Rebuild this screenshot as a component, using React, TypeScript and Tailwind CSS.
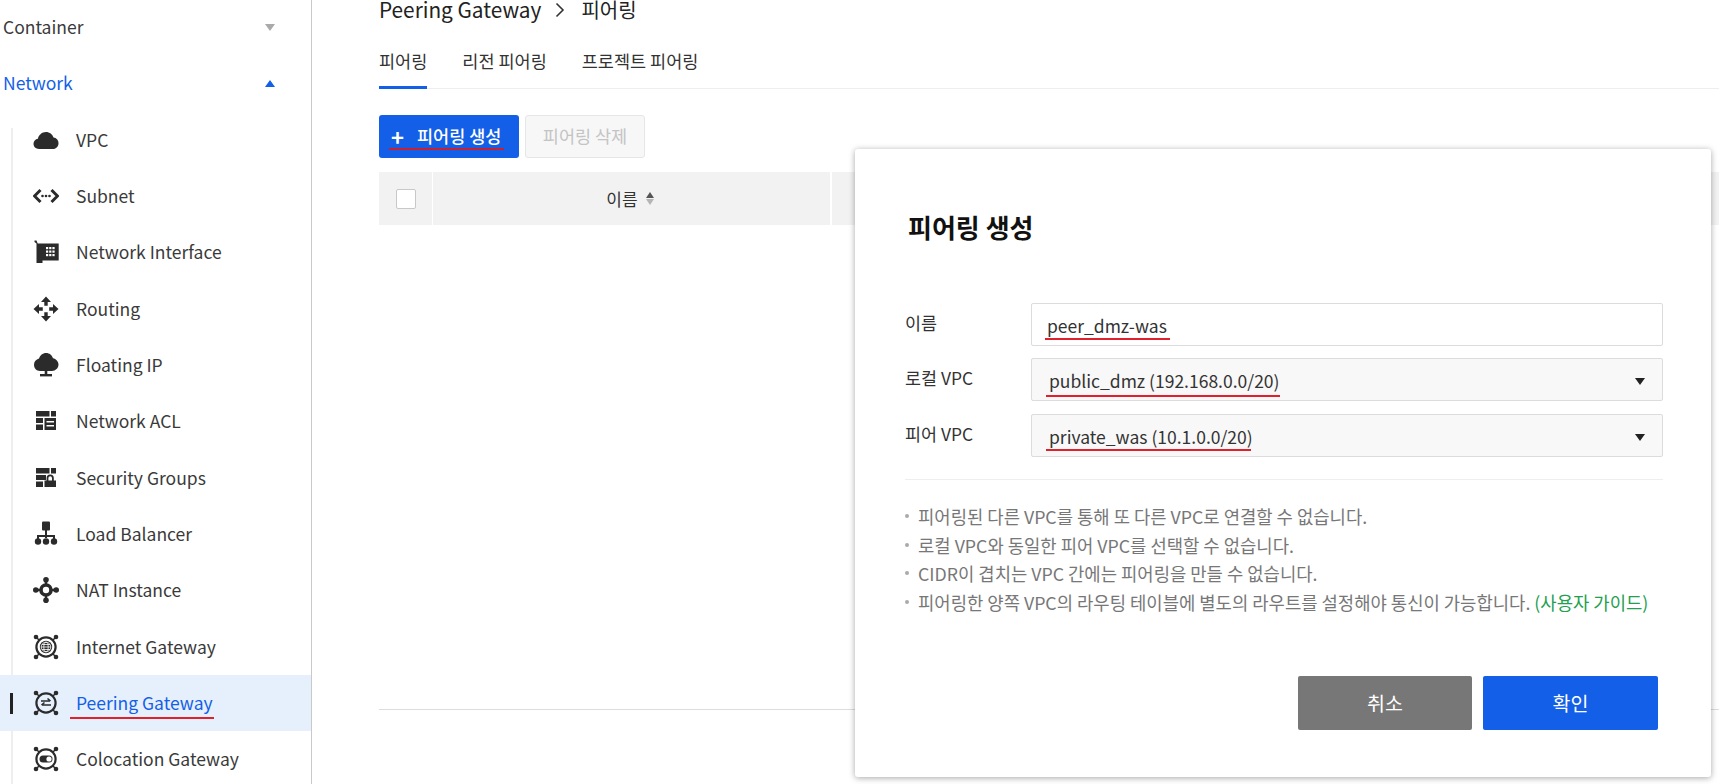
import React from "react";

const C = "#2b2b2b";

function Cloud() {
  return <svg width="26" height="26" viewBox="0 0 26 26"><path fill={C} d="M6 22c-3.300 0-5.500-2.300-5.500-5.200 0-2.600 1.900-4.700 4.400-5C5.700 7.800 9 5 13 5c3.600 0 6.500 2.300 7.500 5.600 2.900.3 5 2.700 5 5.600 0 3.100-2.400 5.800-5.500 5.800z" /></svg>;
}
function Subnet() {
  return <svg width="26" height="26" viewBox="0 0 26 26"><path fill="none" stroke={C} strokeWidth="3" d="M7.500 7 1.500 13l6 6M18.500 7l6 6-6 6" /><circle cx="9.500" cy="13" r="1.300" fill={C} /><circle cx="13" cy="13" r="1.300" fill={C} /><circle cx="16.500" cy="13" r="1.300" fill={C} /></svg>;
}
function Nic() {
  return <svg width="26" height="26" viewBox="0 0 26 26">
    <path fill={C} d="M1.500 1.500h2l1.200 3h21v17H9.500V24H3.500V4.500L1.500 3z" />
    <g fill="#fff"><rect x="13" y="8" width="2.200" height="2.200" /><rect x="16.200" y="8" width="2.200" height="2.200" /><rect x="19.400" y="8" width="2.200" height="2.200" /><rect x="13" y="11.500" width="2.200" height="2.200" /><rect x="16.200" y="11.500" width="2.200" height="2.200" /><rect x="19.400" y="11.500" width="2.200" height="2.200" /><rect x="13" y="15" width="2.200" height="2.200" /><rect x="16.200" y="15" width="2.200" height="2.200" /><rect x="19.400" y="15" width="2.200" height="2.200" /></g>
  </svg>;
}
function Routing() {
  return <svg width="26" height="26" viewBox="0 0 26 26"><g fill={C}>
    <path d="M13 .5 18 6H14.700V9.800h-3.400V6H8z" />
    <path d="M13 25.500 8 20H11.300V16.200h3.400V20H18z" />
    <path d="M.5 13 6 8V11.300H9.800v3.400H6V18z" />
    <path d="M25.500 13 20 18V14.700H16.200v-3.400H20V8z" />
  </g></svg>;
}
function Floating() {
  return <svg width="26" height="26" viewBox="0 0 26 26"><path fill={C} d="M13 1c3.400 0 6.200 2.200 7 5.300 3 .7 5.500 3.200 5.500 6.300 0 3.700-3 6.400-6.500 6.400H7c-3.500 0-6-2.700-6-6.200 0-3 2.100-5.400 5-6.200C7 3.300 9.700 1 13 1z" /><rect x="11.700" y="18" width="2.600" height="5" fill={C} /><rect x="7" y="22" width="12" height="2.400" fill={C} /></svg>;
}
function Acl() {
  return <svg width="26" height="26" viewBox="0 0 26 26"><g fill={C}>
    <rect x="3" y="3" width="13.500" height="5.500" /><rect x="18" y="3" width="5" height="5.500" />
    <rect x="3" y="10" width="7" height="5" /><rect x="3" y="16.500" width="7" height="5.500" />
    <path d="M11.500 10H23v12H11.500zM13.500 13v1.600h7.500V13zM13.500 17v1.600h7.500V17z" fillRule="evenodd" />
  </g></svg>;
}
function Sg() {
  return <svg width="26" height="26" viewBox="0 0 26 26"><g fill={C}>
    <rect x="3" y="3" width="13.500" height="5.500" /><rect x="18" y="3" width="5" height="5.500" />
    <rect x="3" y="10" width="10" height="5" /><rect x="3" y="16.500" width="7" height="5.500" />
    <rect x="11.500" y="15.500" width="11.500" height="6.500" />
    <path fill="none" stroke={C} strokeWidth="1.800" d="M14.500 16v-3a2.700 2.700 0 0 1 5.400 0v3" />
  </g></svg>;
}
function Lb() {
  return <svg width="26" height="26" viewBox="0 0 26 26"><g fill={C}>
    <rect x="9" y="0.500" width="8" height="9" rx="1" />
    <rect x="12" y="8" width="2" height="9" />
    <path d="M4 14h18v4h-2v-2H6v2H4z" />
    <circle cx="5" cy="20.500" r="3.200" /><circle cx="13" cy="20.500" r="3.200" /><circle cx="21" cy="20.500" r="3.200" />
  </g></svg>;
}
function Nat() {
  return <svg width="26" height="26" viewBox="0 0 26 26"><g fill={C}>
    <circle cx="13" cy="2.800" r="2.800" /><circle cx="13" cy="23.200" r="2.800" /><circle cx="2.800" cy="13" r="2.800" /><circle cx="23.200" cy="13" r="2.800" />
    <rect x="11.800" y="3" width="2.400" height="20" /><rect x="3" y="11.800" width="20" height="2.400" />
  </g><circle cx="13" cy="13" r="5" fill="#fff" stroke={C} strokeWidth="3.600" /></svg>;
}
function Ring({ children, bg = "#fff" }: { children: React.ReactNode; bg?: string }) {
  return <svg width="26" height="26" viewBox="0 0 26 26">
    <g stroke={C} strokeWidth="1.500"><path d="M3 3 7 7M23 3l-4 4M3 23l4-4M23 23l-4-4" /></g>
    <g fill={C}><circle cx="3" cy="3" r="2.300" /><circle cx="23" cy="3" r="2.300" /><circle cx="3" cy="23" r="2.300" /><circle cx="23" cy="23" r="2.300" /></g>
    <circle cx="13" cy="13" r="9.600" fill={bg} stroke={C} strokeWidth="2.200" />
    {children}
  </svg>;
}
function IGw() {
  return <Ring><circle cx="13" cy="13" r="6.200" fill={C} /><g fill="none" stroke="#fff" strokeWidth=".8"><circle cx="13" cy="13" r="4.800" /><ellipse cx="13" cy="13" rx="2.200" ry="4.800" /><path d="M8.200 13h9.600M9 10.500h8M9 15.500h8" /></g></Ring>;
}
function PGw() {
  return <Ring bg="#e6effc"><path fill="none" stroke={C} strokeWidth="1.600" d="M8 11h9M14.500 8.500 17.500 11M18 15H9M11.500 12.500 8.500 15" /></Ring>;
}
function CGw() {
  return <Ring><rect x="6.500" y="9.500" width="13" height="7" rx="3.500" fill={C} /><circle cx="16" cy="13" r="2.600" fill="#fff" /></Ring>;
}

const items: { label: string; icon: React.ReactNode; active?: boolean }[] = [
  { label: "VPC", icon: <Cloud /> },
  { label: "Subnet", icon: <Subnet /> },
  { label: "Network Interface", icon: <Nic /> },
  { label: "Routing", icon: <Routing /> },
  { label: "Floating IP", icon: <Floating /> },
  { label: "Network ACL", icon: <Acl /> },
  { label: "Security Groups", icon: <Sg /> },
  { label: "Load Balancer", icon: <Lb /> },
  { label: "NAT Instance", icon: <Nat /> },
  { label: "Internet Gateway", icon: <IGw /> },
  { label: "Peering Gateway", icon: <PGw />, active: true },
  { label: "Colocation Gateway", icon: <CGw /> },
];

function Sidebar() {
  return (
    <aside className="w-[312px] shrink-0 border-r border-[#c9c9c9] -mt-px text-[17.500px] text-[#3a3a3a]">
      <div className="h-[56.33px] flex items-center justify-between pl-[3px] pr-[36px]">
        <span>Container</span>
        <span className="w-0 h-0 border-x-[5.500px] border-x-transparent border-t-[7px] border-t-[#aaaaaa]" />
      </div>
      <div className="h-[56.33px] flex items-center justify-between pl-[3px] pr-[36px] text-[#135fe8]">
        <span>Network</span>
        <span className="w-0 h-0 border-x-[5.500px] border-x-transparent border-b-[7px] border-b-[#135fe8]" />
      </div>
      <div className="relative">
        <div className="absolute left-[11px] top-[16px] bottom-0 w-[2px] bg-[#eeeeee]" />
        {items.map((it) => (
          <div key={it.label} className={`relative h-[56.33px] flex items-center pl-[33px] ${it.active ? "bg-[#e6effc] text-[#135fe8]" : ""}`}>
            {it.active && <div className="absolute left-[10px] top-[18px] w-[3px] h-[21px] bg-[#222222]" />}
            <span className="w-[26px] h-[26px] mr-[17px] shrink-0 flex">{it.icon}</span>
            <span className="relative">
              {it.label}
              {it.active && <span className="absolute left-[-6px] right-[-1px] bottom-[-3px] h-[2px] bg-[#e0202a]" />}
            </span>
          </div>
        ))}
      </div>
    </aside>
  );
}

function Content() {
  return (
    <main className="flex-1 min-w-0 pl-[67px]">
      <div className="flex items-center h-[20px] text-[#222222]">
        <span className="text-[20.800px]">Peering Gateway</span>
        <svg className="ml-[14px] mr-[16px]" width="10" height="16" viewBox="0 0 10 16"><path fill="none" stroke="#333" strokeWidth="1.600" d="M1.500 1.500 8 8l-6.500 6.500" /></svg>
        <span className="text-[20px]">피어링</span>
      </div>
      <div className="mt-[29px] flex gap-[35px] border-b border-[#eeeeee] text-[17.500px] text-[#333333] h-[40px] -mb-px">
        <div className="h-[40px] leading-[24px] border-b-[3px] border-[#135fe8]">피어링</div>
        <div className="leading-[24px]">리전 피어링</div>
        <div className="leading-[24px]">프로젝트 피어링</div>
      </div>
      <div className="mt-[27px] flex gap-[6px] h-[43px]">
        <div className="relative w-[140px] rounded-[3px] bg-[#135fe8] text-white text-[17.500px] font-medium flex items-center pl-[12px]">
          <span className="text-[22px] leading-none w-[26px] -mt-[2px] font-bold">+</span>
          <span>피어링 생성</span>
          <span className="absolute left-[10px] top-[33px] w-[115px] h-[2px] bg-[#c8202c]" />
        </div>
        <div className="w-[120px] rounded-[3px] bg-[#f7f7f7] border border-[#e6e6e6] text-[#c4c4c4] text-[17.500px] flex items-center justify-center">피어링 삭제</div>
      </div>
      <div className="mt-[14px] h-[53px] flex gap-px text-[17px] text-[#333333]">
        <div className="w-[53px] bg-[#f2f2f2] flex items-center justify-center">
          <span className="w-[20px] h-[20px] bg-white border border-[#c8c8c8] rounded-[2px]" />
        </div>
        <div className="w-[397px] bg-[#f2f2f2] flex items-center justify-center gap-[8px] pr-[3px]">
          <span>이름</span>
          <span className="flex flex-col gap-[1px]">
            <span className="w-0 h-0 border-x-[4px] border-x-transparent border-b-[6px] border-b-[#555555]" />
            <span className="w-0 h-0 border-x-[4px] border-x-transparent border-t-[6px] border-t-[#b5b5b5]" />
          </span>
        </div>
        <div className="flex-1 ml-px bg-[#f2f2f2]" />
      </div>
      <div className="h-[485px] border-b border-[#dddddd]" />
    </main>
  );
}

function Field({ label, children, select, mt, line }: { label: string; children: string; select?: boolean; mt: string; line: string }) {
  return (
    <div className={`flex items-center ${mt}`}>
      <div className="w-[126px] text-[17.400px] text-[#333333] -mt-[3px]">{label}</div>
      <div className={`relative w-[632px] h-[43px] border border-[#dcdcdc] rounded-[2px] flex items-center text-[17.500px] text-[#333333] ${select ? "bg-[#f8f8f8] pl-[17px]" : "bg-white pl-[15px]"}`}>
        <span className="relative top-[2px]">{children}</span>
        <span className={`absolute h-[2px] bg-[#e0202a] ${line}`} />
        {select && <span className="absolute right-[17px] top-[19px] w-0 h-0 border-x-[5px] border-x-transparent border-t-[7px] border-t-[#222222]" />}
      </div>
    </div>
  );
}

const notes = [
  "피어링된 다른 VPC를 통해 또 다른 VPC로 연결할 수 없습니다.",
  "로컬 VPC와 동일한 피어 VPC를 선택할 수 없습니다.",
  "CIDR이 겹치는 VPC 간에는 피어링을 만들 수 없습니다.",
  "피어링한 양쪽 VPC의 라우팅 테이블에 별도의 라우트를 설정해야 통신이 가능합니다.",
];

function Modal() {
  return (
    <div className="absolute left-[855px] top-[149px] w-[856px] h-[628px] bg-white rounded-[3px] shadow-[0_1px_6px_rgba(0,0,0,0.35)] pl-[50px] pt-[58px]">
      <h2 className="text-[26px] leading-[40px] font-bold text-[#111111] pl-[3px]">피어링 생성</h2>
      <Field label="이름" mt="mt-[56px]" line="left-[13px] top-[34px] w-[125px]">peer_dmz-was</Field>
      <Field label="로컬 VPC" select mt="mt-[12px]" line="left-[14px] top-[36px] w-[234px]">public_dmz (192.168.0.0/20)</Field>
      <Field label="피어 VPC" select mt="mt-[13px]" line="left-[14px] top-[34px] w-[205px]">private_was (10.1.0.0/20)</Field>
      <div className="w-[758px] h-px bg-[#eeeeee] mt-[22px]" />
      <ul className="mt-[22px] w-[758px] text-[17.750px] text-[#777777] leading-[28.500px]">
        {notes.map((n, i) => (
          <li key={n} className="flex items-center">
            <span className="w-[4px] h-[4px] rounded-full bg-[#aaaaaa] mr-[9px] shrink-0" />
            <span>{n}{i === 3 && <span className="text-[#22a04f]"> (사용자 가이드)</span>}</span>
          </li>
        ))}
      </ul>
      <div className="mt-[60px] w-[753px] flex justify-end gap-[11px] text-[19.500px] text-white">
        <div className="w-[174px] h-[54px] rounded-[2px] bg-[#777777] flex items-center justify-center">취소</div>
        <div className="w-[175px] h-[54px] rounded-[2px] bg-[#135fe8] flex items-center justify-center">확인</div>
      </div>
    </div>
  );
}

export default function App() {
  return (
    <div className="relative w-[1719px] h-[784px] overflow-hidden bg-white flex font-['Noto_Sans_CJK_KR','Noto_Sans',sans-serif]">
      <Sidebar />
      <Content />
      <Modal />
    </div>
  );
}
